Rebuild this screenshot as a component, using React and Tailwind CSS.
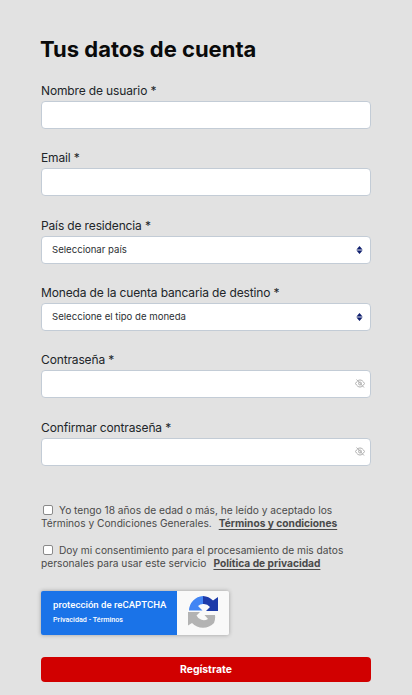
const sans = "font-['Inter','Liberation_Sans',sans-serif]";

function Label({ children }) {
  return <label className="block h-[17px] text-[12px] tracking-[-0.14px] leading-[17px] text-[#212529] mb-[2px]">{children}</label>;
}

function Sort() {
  return (
    <svg width="7" height="8" viewBox="0 0 7 8" className="absolute right-[7px] top-[9px]">
      <path d="M3.5 0 L6.5 3.4 H0.5 Z M3.5 8 L6.5 4.6 H0.5 Z" fill="#0f1f6e" />
      <path d="M0.5 4 H6.5" stroke="#0f1f6e" strokeWidth="0.5" opacity="0.5" />
    </svg>
  );
}

function EyeOff() {
  return (
    <svg width="10" height="9" viewBox="0 0 10 9" fill="none" stroke="#b0b0b0" strokeWidth="1" className="absolute right-[5px] top-[8px]">
      <path d="M0.5 4.5 C2 1.8 3.5 1 5 1 C6.5 1 8 1.8 9.5 4.5 C8 7.2 6.5 8 5 8 C3.5 8 2 7.2 0.5 4.5 Z" />
      <circle cx="5" cy="4.5" r="1.5" />
      <path d="M1.5 0.5 L9 8.5" />
    </svg>
  );
}

function Field({ label, mb = "mb-[20.35px]", children }) {
  return (
    <div className={mb}>
      <Label>{label}</Label>
      <div className="relative h-[28px] rounded-[4px] bg-white border border-[#c3ccd6] text-[9.6px] leading-[26px] text-[#2b2f33] pl-[10px]">
        {children}
      </div>
    </div>
  );
}

function Check() {
  return <span className="inline-block align-[-1px] w-[10px] h-[10px] bg-white border border-[#8a8a8a] rounded-[2px] ml-[2px] mr-[6px]" />;
}

function Recaptcha() {
  return (
    <svg width="30" height="33" viewBox="0 0 30 33">
      <path d="M15 0 A15 15 0 0 1 25 4.5 L30 1 V15 H18 L22 11 A8 8 0 0 0 15 8 Z" fill="#1c3aa9" />
      <path d="M1 14.5 A15 15 0 0 1 15 0 V8 A8 8 0 0 0 10 10 L14.5 14.5 Z" fill="#4285f4" />
      <path d="M0 16 H12 L8.5 19.5 A8 8 0 0 0 20 23 L16.5 19 H27 A15 15 0 0 1 26 27 A15 15 0 0 1 4 27 L0 29.5 Z" fill="#b3b3b3" />
    </svg>
  );
}

export default function App() {
  return (
    <div className={`${sans} w-[412px] h-[695px] overflow-hidden bg-[#e2e2e2] px-[41px] pt-[36px]`}>
      <h1 className="text-[22px] leading-[26px] font-bold text-[#0a0a0a] mb-[20px] -ml-[1px]">Tus datos de cuenta</h1>
      <Field label="Nombre de usuario *" />
      <Field label="Email *" />
      <Field label="País de residencia *">
        Seleccionar país
        <Sort />
      </Field>
      <Field label="Moneda de la cuenta bancaria de destino *">
        Seleccione el tipo de moneda
        <Sort />
      </Field>
      <Field label="Contraseña *">
        <EyeOff />
      </Field>
      <Field label="Confirmar contraseña *" mb="mb-[38.25px]">
        <EyeOff />
      </Field>

      <p className="text-[10.2px] leading-[13px] text-[#4a4a4a] mb-[14px]">
        <Check />
        Yo tengo 18 años de edad o más, he leído y aceptado los<br />
        Términos y Condiciones Generales.
        <span className="ml-[7px] font-bold underline underline-offset-2">Términos y condiciones</span>
      </p>
      <p className="text-[10.2px] leading-[13px] text-[#4a4a4a] mb-[21px]">
        <Check />
        Doy mi consentimiento para el procesamiento de mis datos<br />
        personales para usar este servicio
        <span className="ml-[7px] font-bold underline underline-offset-2">Política de privacidad</span>
      </p>

      <div className="flex w-[188px] h-[44px] rounded-[2px] shadow-[0_0_4px_rgba(0,0,0,0.3)] overflow-hidden mb-[22px]">
        <div className="w-[136px] bg-[#1a73e8] text-white pl-[12px] font-['Roboto',sans-serif]">
          <div className="text-[9.6px] leading-[12px] mt-[8px] font-medium">protección de reCAPTCHA</div>
          <div className="text-[7.2px] leading-[9px] mt-[4px] font-medium">Privacidad - Términos</div>
        </div>
        <div className="flex-1 bg-[#f9f9f9] flex items-center justify-center">
          <Recaptcha />
        </div>
      </div>

      <button className="block w-[330px] h-[25px] rounded-[4px] bg-[#d10000] text-white text-[10.4px] font-bold">Regístrate</button>
    </div>
  );
}
